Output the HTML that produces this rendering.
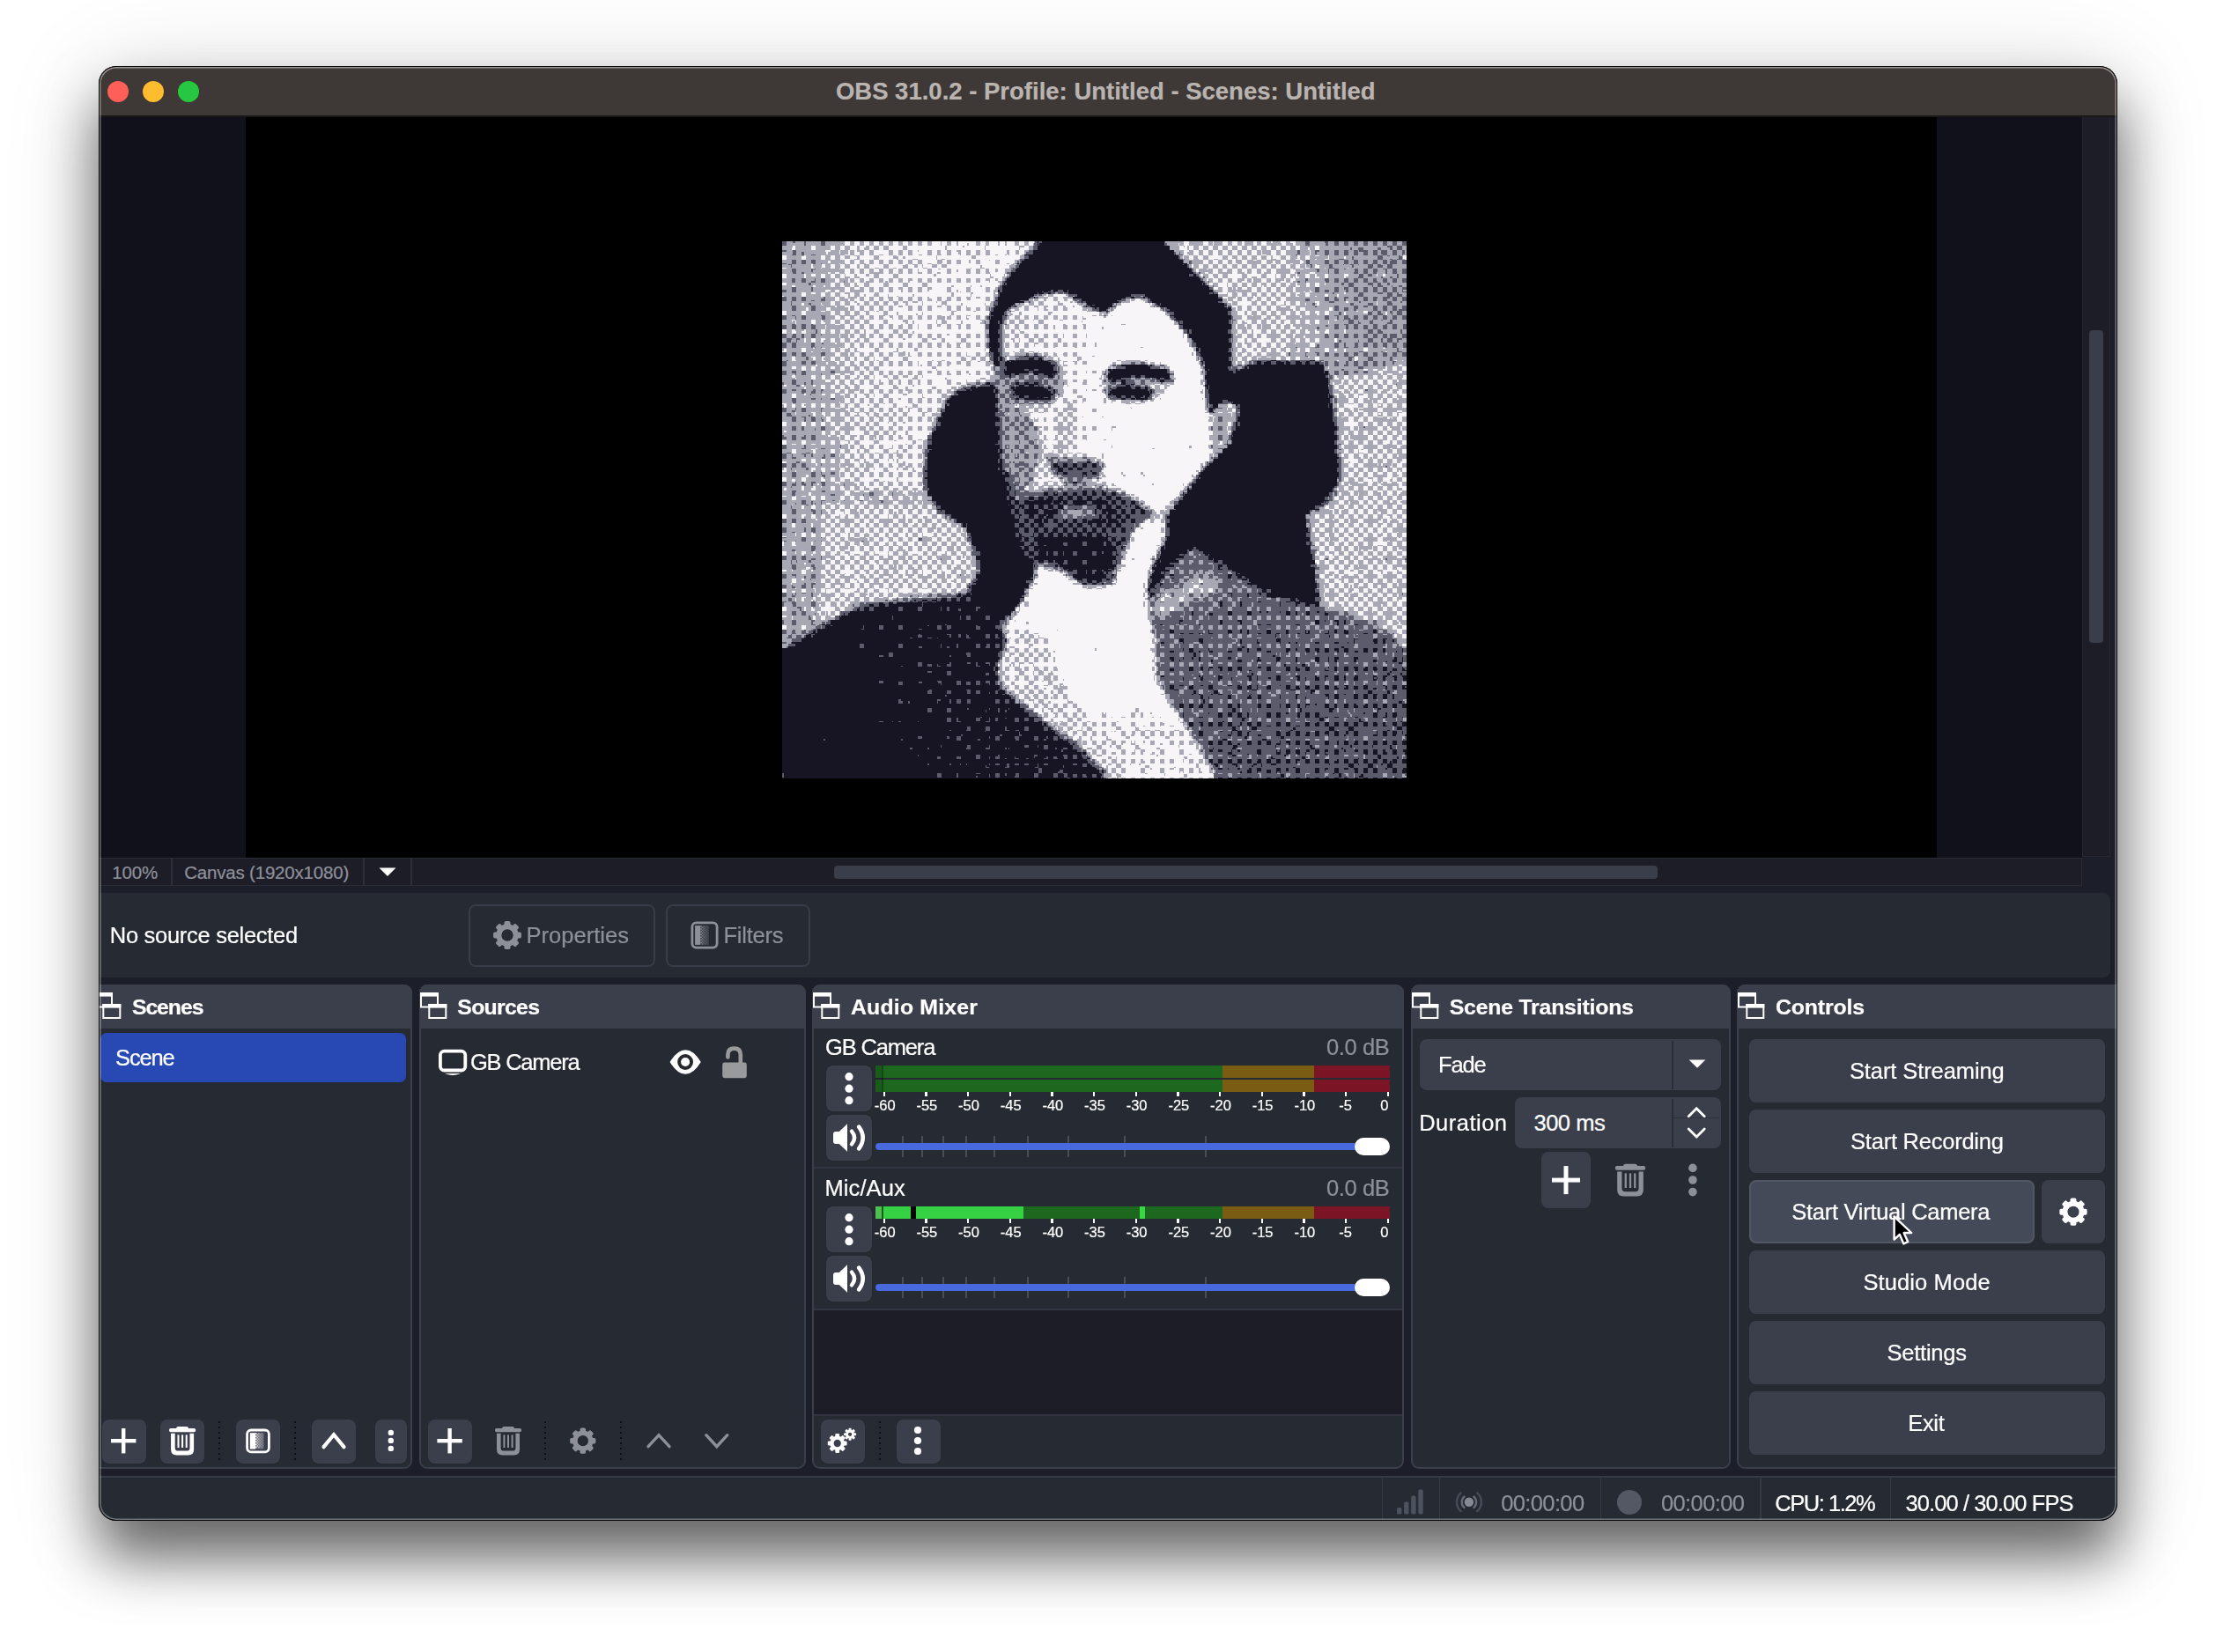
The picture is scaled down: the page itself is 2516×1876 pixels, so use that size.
<!DOCTYPE html>
<html><head><meta charset="utf-8"><title>OBS 31.0.2 - Profile: Untitled - Scenes: Untitled</title>
<style>
html,body{margin:0;padding:0;background:#fff;}
body{width:2516px;height:1876px;position:relative;overflow:hidden;font-family:"Liberation Sans",sans-serif;}
.a{position:absolute;display:block;box-sizing:border-box;}
.t{position:absolute;white-space:nowrap;-webkit-text-stroke:0.22px currentColor;}
#shadow{position:absolute;left:112px;top:75px;width:2292px;height:1652px;border-radius:20px;
 box-shadow:0 42px 64px 0 rgba(0,0,0,0.56),0 10px 110px 0 rgba(0,0,0,0.16);}
#win{position:absolute;left:112px;top:75px;width:2292px;height:1652px;border-radius:20px;overflow:hidden;background:#1c1e29;}
#in{position:absolute;left:-112px;top:-75px;width:2516px;height:1876px;transform:translateZ(0);}
#edge{position:absolute;left:112px;top:75px;width:2292px;height:1652px;border-radius:20px;box-sizing:border-box;
 border:1px solid rgba(0,0,0,0.82);box-shadow:inset 0 0 0 1.6px rgba(255,255,255,0.34),inset 0 1.2px 0 0.4px rgba(255,255,255,0.2);pointer-events:none;}
</style></head><body>
<div id="shadow"></div>
<div id="win"><div id="in">
<div class="a" style="left:112.0px;top:75.0px;width:2292.0px;height:57.0px;background:#3e3836;"></div>
<div class="a" style="left:112.0px;top:131.0px;width:2292.0px;height:2.0px;background:#1a1716;"></div>
<div class="a" style="left:121.8px;top:91.8px;width:24.4px;height:24.4px;border-radius:50%;background:#fe5f57;"></div>
<div class="a" style="left:161.8px;top:91.8px;width:24.4px;height:24.4px;border-radius:50%;background:#febc2e;"></div>
<div class="a" style="left:201.8px;top:91.8px;width:24.4px;height:24.4px;border-radius:50%;background:#27c840;"></div>
<div class="t " style="left:948.9px;top:83.5px;height:40px;line-height:40px;font-size:27.5px;color:#bab4b1;font-weight:bold;">OBS 31.0.2 - Profile: Untitled - Scenes: Untitled</div>
<div class="a" style="left:112.0px;top:133.0px;width:2252.0px;height:841.0px;background:#10111a;"></div>
<div class="a" style="left:278.6px;top:133.0px;width:1920.4px;height:841.0px;background:#000;"></div>
<div class="a" style="left:2364.0px;top:133.0px;width:32.0px;height:840.0px;background:#1c1d27;border-left:1px solid #262830;border-right:1px solid #262830;border-bottom:1px solid #262830;"></div>
<div class="a" style="left:2372.0px;top:375.3px;width:16.2px;height:354.7px;background:#3a3e4b;border-radius:4px;"></div>
<div class="a" style="left:112.0px;top:974.0px;width:2252.0px;height:32.0px;background:#1c1d27;border-top:1px solid #2a2c35;border-bottom:1px solid #2a2c35;"></div>
<div class="a" style="left:2363.0px;top:974.0px;width:1.0px;height:32.0px;background:#2a2c35;"></div>
<div class="a" style="left:947.0px;top:982.5px;width:935.0px;height:15.5px;background:#3a3e4b;border-radius:4px;"></div>
<div class="a" style="left:194.0px;top:975.0px;width:1.5px;height:30.0px;background:#2c2e38;"></div>
<div class="a" style="left:412.0px;top:975.0px;width:1.5px;height:30.0px;background:#2c2e38;"></div>
<div class="a" style="left:466.3px;top:975.0px;width:1.5px;height:30.0px;background:#2c2e38;"></div>
<div class="t " style="left:127.3px;top:971.3px;height:40px;line-height:40px;font-size:20.5px;color:#8d9099;letter-spacing:-0.19px;">100%</div>
<div class="t " style="left:209.2px;top:971.3px;height:40px;line-height:40px;font-size:20.5px;color:#8d9099;letter-spacing:-0.19px;">Canvas (1920x1080)</div>
<svg class="a" style="left:429.0px;top:984.0px;" width="22.0" height="12.0" viewBox="0 0 22 12"><path d="M1.5,1.5 L20.5,1.5 L11,11 Z" fill="#fff"/></svg>
<svg class="a" style="left:887.6px;top:273.6px;" width="709.2" height="610.6" viewBox="0 0 128 112" preserveAspectRatio="none" shape-rendering="crispEdges"><defs>
<linearGradient id="bgL" x1="0" y1="0" x2="1" y2="0"><stop offset="0" stop-color="rgb(153,153,153)"/><stop offset="0.085" stop-color="rgb(158,158,158)"/><stop offset="0.14" stop-color="rgb(194,194,194)"/><stop offset="0.24" stop-color="rgb(209,209,209)"/><stop offset="0.36" stop-color="rgb(219,219,219)"/><stop offset="0.55" stop-color="rgb(214,214,214)"/><stop offset="1" stop-color="rgb(204,204,204)"/></linearGradient>
<linearGradient id="bgR" x1="0" y1="0.1" x2="1" y2="0" ><stop offset="0" stop-color="rgb(196,196,196)"/><stop offset="0.42" stop-color="rgb(189,189,189)"/><stop offset="0.62" stop-color="rgb(150,150,150)"/><stop offset="1" stop-color="rgb(128,128,128)"/></linearGradient>
<linearGradient id="jkL" x1="0" y1="0.5" x2="1" y2="0.3"><stop offset="0" stop-color="rgb(0,0,0)"/><stop offset="0.22" stop-color="rgb(0,0,0)"/><stop offset="0.5" stop-color="rgb(26,26,26)"/><stop offset="0.8" stop-color="rgb(33,33,33)"/><stop offset="1" stop-color="rgb(8,8,8)"/></linearGradient>
<linearGradient id="jkR" x1="0" y1="0" x2="0.4" y2="1"><stop offset="0" stop-color="rgb(112,112,112)"/><stop offset="1" stop-color="rgb(84,84,84)"/></linearGradient>
<linearGradient id="face" x1="0" y1="0" x2="1" y2="0"><stop offset="0" stop-color="rgb(189,189,189)"/><stop offset="0.3" stop-color="rgb(219,219,219)"/><stop offset="0.5" stop-color="rgb(245,245,245)"/><stop offset="1" stop-color="rgb(255,255,255)"/></linearGradient>
<linearGradient id="hand" x1="0" y1="0" x2="1" y2="0"><stop offset="0" stop-color="rgb(217,217,217)"/><stop offset="0.25" stop-color="rgb(252,252,252)"/><stop offset="1" stop-color="rgb(252,252,252)"/></linearGradient>
<filter id="gbd" x="-4" y="-4" width="136" height="120" filterUnits="userSpaceOnUse" primitiveUnits="userSpaceOnUse" color-interpolation-filters="sRGB"><feGaussianBlur in="SourceGraphic" stdDeviation="0.55" result="g0"/><feTurbulence type="fractalNoise" baseFrequency="0.5" numOctaves="2" seed="7" result="tn"/><feColorMatrix in="tn" type="matrix" values="1.6 0 0 0 -0.3  1.6 0 0 0 -0.3  1.6 0 0 0 -0.3  0 0 0 0 1" result="noise"/><feComposite in="g0" in2="noise" operator="arithmetic" k1="0" k2="1" k3="0.2" k4="-0.1" result="g1"/><feFlood x="0.0000" y="0" width="0.1687" height="1" flood-color="rgb(234,0,0)" result="rx0"/><feFlood x="0.1667" y="0" width="0.1687" height="1" flood-color="rgb(191,0,0)" result="rx1"/><feFlood x="0.3333" y="0" width="0.1687" height="1" flood-color="rgb(149,0,0)" result="rx2"/><feFlood x="0.5000" y="0" width="0.1687" height="1" flood-color="rgb(106,0,0)" result="rx3"/><feFlood x="0.6667" y="0" width="0.1687" height="1" flood-color="rgb(64,0,0)" result="rx4"/><feFlood x="0.8333" y="0" width="0.1687" height="1" flood-color="rgb(21,0,0)" result="rx5"/><feMerge x="0" y="0" width="1" height="1" result="rampx"><feMergeNode in="rx0"/><feMergeNode in="rx1"/><feMergeNode in="rx2"/><feMergeNode in="rx3"/><feMergeNode in="rx4"/><feMergeNode in="rx5"/></feMerge><feFlood x="0" y="0.0000" width="1" height="0.1687" flood-color="rgb(0,234,0)" result="ry0"/><feFlood x="0" y="0.1667" width="1" height="0.1687" flood-color="rgb(0,191,0)" result="ry1"/><feFlood x="0" y="0.3333" width="1" height="0.1687" flood-color="rgb(0,149,0)" result="ry2"/><feFlood x="0" y="0.5000" width="1" height="0.1687" flood-color="rgb(0,106,0)" result="ry3"/><feFlood x="0" y="0.6667" width="1" height="0.1687" flood-color="rgb(0,64,0)" result="ry4"/><feFlood x="0" y="0.8333" width="1" height="0.1687" flood-color="rgb(0,21,0)" result="ry5"/><feMerge x="0" y="0" width="1" height="1" result="rampy"><feMergeNode in="ry0"/><feMergeNode in="ry1"/><feMergeNode in="ry2"/><feMergeNode in="ry3"/><feMergeNode in="ry4"/><feMergeNode in="ry5"/></feMerge><feComposite in="rampx" in2="rampy" operator="arithmetic" k1="0" k2="1" k3="1" k4="0" x="0" y="0" width="1" height="1" result="ramp"/><feTile in="ramp" x="-4" y="-4" width="136" height="120" result="dmap"/><feDisplacementMap in="g1" in2="dmap" scale="1" xChannelSelector="R" yChannelSelector="G" result="gray"/><feFlood x="0" y="0" width="1" height="1" flood-color="rgb(8,8,8)" result="b00"/><feFlood x="1" y="0" width="1" height="1" flood-color="rgb(135,135,135)" result="b01"/><feFlood x="2" y="0" width="1" height="1" flood-color="rgb(40,40,40)" result="b02"/><feFlood x="3" y="0" width="1" height="1" flood-color="rgb(167,167,167)" result="b03"/><feFlood x="0" y="1" width="1" height="1" flood-color="rgb(199,199,199)" result="b10"/><feFlood x="1" y="1" width="1" height="1" flood-color="rgb(72,72,72)" result="b11"/><feFlood x="2" y="1" width="1" height="1" flood-color="rgb(231,231,231)" result="b12"/><feFlood x="3" y="1" width="1" height="1" flood-color="rgb(104,104,104)" result="b13"/><feFlood x="0" y="2" width="1" height="1" flood-color="rgb(56,56,56)" result="b20"/><feFlood x="1" y="2" width="1" height="1" flood-color="rgb(183,183,183)" result="b21"/><feFlood x="2" y="2" width="1" height="1" flood-color="rgb(24,24,24)" result="b22"/><feFlood x="3" y="2" width="1" height="1" flood-color="rgb(151,151,151)" result="b23"/><feFlood x="0" y="3" width="1" height="1" flood-color="rgb(247,247,247)" result="b30"/><feFlood x="1" y="3" width="1" height="1" flood-color="rgb(120,120,120)" result="b31"/><feFlood x="2" y="3" width="1" height="1" flood-color="rgb(215,215,215)" result="b32"/><feFlood x="3" y="3" width="1" height="1" flood-color="rgb(88,88,88)" result="b33"/><feMerge x="0" y="0" width="4" height="4" result="tile"><feMergeNode in="b00"/><feMergeNode in="b01"/><feMergeNode in="b02"/><feMergeNode in="b03"/><feMergeNode in="b10"/><feMergeNode in="b11"/><feMergeNode in="b12"/><feMergeNode in="b13"/><feMergeNode in="b20"/><feMergeNode in="b21"/><feMergeNode in="b22"/><feMergeNode in="b23"/><feMergeNode in="b30"/><feMergeNode in="b31"/><feMergeNode in="b32"/><feMergeNode in="b33"/></feMerge><feTile in="tile" x="-4" y="-4" width="136" height="120" result="pat"/><feComposite in="gray" in2="pat" operator="arithmetic" k1="0" k2="1" k3="0.3333" k4="-0.16667" result="d"/><feComponentTransfer in="d"><feFuncR type="discrete" tableValues="0.094 0.357 0.659 0.969"/><feFuncG type="discrete" tableValues="0.086 0.357 0.659 0.961"/><feFuncB type="discrete" tableValues="0.141 0.420 0.710 0.976"/><feFuncA type="linear" slope="0" intercept="1"/></feComponentTransfer></filter></defs><g filter="url(#gbd)"><rect x="-6" y="-6" width="140" height="124" fill="rgb(204,204,204)"/><rect x="-5" y="-5" width="138" height="122" fill="url(#bgL)"/><polygon points="78.14,0.00 78.14,-5.05 132.97,-5.05 128.00,0.00 132.97,85.88 128.00,85.88 108.68,76.49 80.27,46.19" fill="url(#bgR)" /><polygon points="111.52,29.59 128.00,24.54 132.97,24.54 132.97,85.15 128.00,85.15 122.89,80.10 110.24,75.77 107.26,57.01 114.36,49.43" fill="rgb(186,186,186)" /><polygon points="-4.97,52.10 0.00,52.10 33.39,52.10 33.39,53.84 0.00,53.84 -4.97,53.84" fill="rgb(158,158,158)" /><polygon points="-4.97,53.84 0.00,53.84 39.07,53.84 40.49,74.33 16.34,75.77 0.00,85.15 -4.97,85.15" fill="rgb(191,191,191)" /><polygon points="-4.97,53.84 0.00,53.84 8.52,53.84 7.10,80.82 0.00,85.15 -4.97,85.15" fill="rgb(158,158,158)" /><polygon points="33.95,32.47 37.65,30.16 44.75,29.23 44.75,47.63 50.08,55.57 51.85,68.56 49.01,77.22 40.49,68.56 37.65,59.54 31.96,55.93 28.98,50.52 29.69,41.86" fill="rgb(0,0,0)" /><polygon points="91.63,27.42 97.03,24.97 109.96,24.90 111.95,28.29 113.51,38.97 114.22,49.43 111.66,54.27 107.12,57.01 108.54,64.23 110.24,75.92 100.16,73.75 89.50,66.75 83.82,63.51 78.85,67.84 74.94,74.33 73.52,64.95 78.14,57.73 85.95,47.63 87.37,36.08" fill="rgb(0,0,0)" /><polygon points="-4.97,85.30 0.00,85.30 9.23,79.38 16.34,75.63 37.65,73.46 49.72,73.25 44.75,80.82 46.17,82.63 44.04,88.76 44.75,92.73 51.14,98.14 58.96,103.92 66.06,110.56 66.06,115.61 66.06,117.05 66.06,112.00 -4.97,117.05 0.00,112.00" fill="url(#jkL)" /><polygon points="40.49,67.84 51.85,67.84 51.85,70.00 49.01,75.05 44.75,80.46 37.65,73.97" fill="rgb(5,5,5)" /><polygon points="74.94,74.33 78.85,67.84 83.82,63.51 89.50,66.75 100.16,73.75 110.24,75.92 122.89,80.25 128.00,85.30 132.97,85.30 132.97,117.05 128.00,112.00 88.08,117.05 88.08,112.00 84.53,103.92 76.71,91.65 76.00,82.27" fill="url(#jkR)" /><polygon points="76.00,73.97 87.72,68.41 89.86,72.31 76.71,78.66" fill="rgb(168,168,168)" /><polygon points="43.90,14.79 51.85,11.19 57.54,10.10 62.51,13.35 66.06,15.01 68.90,12.41 73.16,11.19 78.85,14.43 83.11,19.48 86.09,25.98 86.80,36.08 90.92,33.20 93.41,34.64 91.63,41.86 87.37,46.19 85.81,47.63 80.27,53.40 75.29,58.45 69.61,60.98 56.12,59.54 49.01,53.40 44.75,46.19 43.76,28.87" fill="url(#face)" /><polygon points="44.75,9.38 49.01,3.61 52.92,0.00 52.92,-5.05 78.14,-5.05 78.14,0.00 83.82,5.63 88.79,10.68 91.92,14.29 92.13,25.98 92.48,33.20 90.57,33.20 87.37,36.44 86.30,25.98 83.11,19.48 78.85,14.58 73.16,11.33 68.90,12.56 66.06,15.15 62.51,13.42 57.54,10.25 51.85,11.40 46.31,13.86 44.75,17.32 44.61,29.59 42.48,23.45 41.91,16.60" fill="rgb(0,0,0)" /><polygon points="87.37,37.16 90.21,34.28 92.48,35.00 90.92,41.86 87.37,45.46" fill="rgb(153,153,153)" /><ellipse cx="51.14" cy="29.23" rx="6.75" ry="5.05" fill="rgb(102,102,102)" opacity="0.6"/><ellipse cx="72.10" cy="29.44" rx="7.46" ry="3.97" fill="rgb(128,128,128)" opacity="0.55"/><polygon points="45.18,25.11 51.14,23.67 56.54,25.55 55.83,28.29 50.43,26.99 45.60,28.29" fill="rgb(0,0,0)" /><polygon points="66.34,26.56 71.74,25.11 78.85,26.27 80.41,29.30 72.45,28.29 66.77,29.44" fill="rgb(0,0,0)" /><polygon points="47.02,30.16 51.14,29.30 55.83,30.89 55.41,33.05 47.59,32.76" fill="rgb(0,0,0)" /><polygon points="66.63,30.45 71.03,29.59 76.00,30.74 75.29,33.05 67.05,32.76" fill="rgb(0,0,0)" /><polygon points="53.84,44.16 56.83,45.46 63.22,45.18 66.06,46.19 64.99,49.43 58.96,50.52 55.41,48.35" fill="rgb(76,76,76)" /><polygon points="57.54,33.20 61.09,33.20 58.96,44.74 55.41,45.46" fill="rgb(158,158,158)" opacity="0.6"/><polygon points="44.75,45.46 49.01,52.68 55.41,51.38 66.06,50.88 72.45,53.40 78.14,57.73 73.87,60.98 70.32,67.84 68.19,71.59 61.80,71.80 56.83,68.20 50.43,66.75 47.59,60.62" fill="rgb(76,76,76)" /><polygon points="49.72,53.40 66.77,52.68 70.32,56.29 66.06,59.18 51.85,58.45" fill="rgb(46,46,46)" /><polygon points="55.41,55.93 63.22,55.21 65.35,57.01 57.54,57.88" fill="rgb(153,153,153)" /><polygon points="51.85,60.98 66.06,60.62 68.90,64.95 66.06,70.72 61.80,71.44 57.54,67.84 51.85,66.03" fill="rgb(31,31,31)" /><polygon points="44.04,29.59 49.01,33.20 53.27,41.86 51.85,50.52 49.01,52.68 44.75,45.46" fill="rgb(128,128,128)" opacity="0.8"/><polygon points="74.73,57.73 78.28,57.59 78.99,60.62 75.65,67.84 74.02,75.05 76.00,82.27 76.71,91.65 80.27,98.14 84.53,103.92 88.22,110.56 88.22,115.61 66.06,115.61 66.06,110.56 58.96,103.92 51.14,98.14 44.75,92.73 44.04,88.76 46.17,82.63 44.75,80.46 49.01,75.05 51.85,69.42 57.54,69.42 63.22,72.31 67.62,71.59 69.75,66.39 71.88,60.62" fill="url(#hand)" /><polygon points="44.75,88.76 49.01,80.82 53.98,82.27 57.54,91.65 63.22,99.59 70.32,110.56 70.32,115.61 66.06,115.61 66.06,110.56 58.96,103.92 51.14,98.14 44.75,92.73" fill="rgb(199,199,199)" /><polygon points="63.22,99.59 73.16,96.70 82.40,101.75 87.37,110.56 87.37,115.61 70.32,115.61 70.32,110.56" fill="rgb(214,214,214)" /></g></svg>
<div class="a" style="left:104.0px;top:1014.0px;width:2292.0px;height:96.0px;background:#252a33;border-radius:8px;"></div>
<div class="t " style="left:124.8px;top:1041.7px;height:40px;line-height:40px;font-size:25.5px;color:#fff;letter-spacing:-0.29px;">No source selected</div>
<div class="a" style="left:532.3px;top:1026.5px;width:211.5px;height:71.0px;background:transparent;border-radius:8px;border:2px solid #383c48;"></div>
<svg class="a" style="left:559.0px;top:1045.0px;" width="34.0" height="34.0" viewBox="0 0 34 34"><circle cx="17" cy="17" r="9.70" fill="none" stroke="#8d9099" stroke-width="6.04"/><rect x="13.50" y="1.10" width="7.00" height="6.36" rx="1.75" fill="#8d9099" transform="rotate(0.0 17 17)"/><rect x="13.50" y="1.10" width="7.00" height="6.36" rx="1.75" fill="#8d9099" transform="rotate(45.0 17 17)"/><rect x="13.50" y="1.10" width="7.00" height="6.36" rx="1.75" fill="#8d9099" transform="rotate(90.0 17 17)"/><rect x="13.50" y="1.10" width="7.00" height="6.36" rx="1.75" fill="#8d9099" transform="rotate(135.0 17 17)"/><rect x="13.50" y="1.10" width="7.00" height="6.36" rx="1.75" fill="#8d9099" transform="rotate(180.0 17 17)"/><rect x="13.50" y="1.10" width="7.00" height="6.36" rx="1.75" fill="#8d9099" transform="rotate(225.0 17 17)"/><rect x="13.50" y="1.10" width="7.00" height="6.36" rx="1.75" fill="#8d9099" transform="rotate(270.0 17 17)"/><rect x="13.50" y="1.10" width="7.00" height="6.36" rx="1.75" fill="#8d9099" transform="rotate(315.0 17 17)"/></svg>
<div class="t " style="left:597.4px;top:1041.7px;height:40px;line-height:40px;font-size:25.5px;color:#8d9099;letter-spacing:0.04px;">Properties</div>
<div class="a" style="left:756.4px;top:1026.5px;width:163.6px;height:71.0px;background:transparent;border-radius:8px;border:2px solid #383c48;"></div>
<svg class="a" style="left:784.0px;top:1046.0px;" width="32.0" height="32.0" viewBox="0 0 32 32"><rect x="1.9" y="1.9" width="28.2" height="28.2" rx="4.5" fill="none" stroke="#8d9099" stroke-width="2.8"/><rect x="5.1" y="5.1" width="6.2" height="21.8" fill="#8d9099"/><rect x="11.30" y="5.10" width="1.55" height="1.55" fill="#8d9099" fill-opacity="0.95"/><rect x="11.30" y="8.20" width="1.55" height="1.55" fill="#8d9099" fill-opacity="0.95"/><rect x="11.30" y="11.30" width="1.55" height="1.55" fill="#8d9099" fill-opacity="0.95"/><rect x="11.30" y="14.40" width="1.55" height="1.55" fill="#8d9099" fill-opacity="0.95"/><rect x="11.30" y="17.50" width="1.55" height="1.55" fill="#8d9099" fill-opacity="0.95"/><rect x="11.30" y="20.60" width="1.55" height="1.55" fill="#8d9099" fill-opacity="0.95"/><rect x="11.30" y="23.70" width="1.55" height="1.55" fill="#8d9099" fill-opacity="0.95"/><rect x="12.85" y="6.65" width="1.55" height="1.55" fill="#8d9099" fill-opacity="0.75"/><rect x="12.85" y="9.75" width="1.55" height="1.55" fill="#8d9099" fill-opacity="0.75"/><rect x="12.85" y="12.85" width="1.55" height="1.55" fill="#8d9099" fill-opacity="0.75"/><rect x="12.85" y="15.95" width="1.55" height="1.55" fill="#8d9099" fill-opacity="0.75"/><rect x="12.85" y="19.05" width="1.55" height="1.55" fill="#8d9099" fill-opacity="0.75"/><rect x="12.85" y="22.15" width="1.55" height="1.55" fill="#8d9099" fill-opacity="0.75"/><rect x="12.85" y="25.25" width="1.55" height="1.55" fill="#8d9099" fill-opacity="0.75"/><rect x="14.40" y="5.10" width="1.55" height="1.55" fill="#8d9099" fill-opacity="0.55"/><rect x="14.40" y="8.20" width="1.55" height="1.55" fill="#8d9099" fill-opacity="0.55"/><rect x="14.40" y="11.30" width="1.55" height="1.55" fill="#8d9099" fill-opacity="0.55"/><rect x="14.40" y="14.40" width="1.55" height="1.55" fill="#8d9099" fill-opacity="0.55"/><rect x="14.40" y="17.50" width="1.55" height="1.55" fill="#8d9099" fill-opacity="0.55"/><rect x="14.40" y="20.60" width="1.55" height="1.55" fill="#8d9099" fill-opacity="0.55"/><rect x="14.40" y="23.70" width="1.55" height="1.55" fill="#8d9099" fill-opacity="0.55"/><rect x="15.95" y="6.65" width="1.55" height="1.55" fill="#8d9099" fill-opacity="0.4"/><rect x="15.95" y="9.75" width="1.55" height="1.55" fill="#8d9099" fill-opacity="0.4"/><rect x="15.95" y="12.85" width="1.55" height="1.55" fill="#8d9099" fill-opacity="0.4"/><rect x="15.95" y="15.95" width="1.55" height="1.55" fill="#8d9099" fill-opacity="0.4"/><rect x="15.95" y="19.05" width="1.55" height="1.55" fill="#8d9099" fill-opacity="0.4"/><rect x="15.95" y="22.15" width="1.55" height="1.55" fill="#8d9099" fill-opacity="0.4"/><rect x="15.95" y="25.25" width="1.55" height="1.55" fill="#8d9099" fill-opacity="0.4"/><rect x="17.50" y="5.10" width="1.55" height="1.55" fill="#8d9099" fill-opacity="0.28"/><rect x="17.50" y="8.20" width="1.55" height="1.55" fill="#8d9099" fill-opacity="0.28"/><rect x="17.50" y="11.30" width="1.55" height="1.55" fill="#8d9099" fill-opacity="0.28"/><rect x="17.50" y="14.40" width="1.55" height="1.55" fill="#8d9099" fill-opacity="0.28"/><rect x="17.50" y="17.50" width="1.55" height="1.55" fill="#8d9099" fill-opacity="0.28"/><rect x="17.50" y="20.60" width="1.55" height="1.55" fill="#8d9099" fill-opacity="0.28"/><rect x="17.50" y="23.70" width="1.55" height="1.55" fill="#8d9099" fill-opacity="0.28"/><rect x="19.05" y="6.65" width="1.55" height="1.55" fill="#8d9099" fill-opacity="0.18"/><rect x="19.05" y="9.75" width="1.55" height="1.55" fill="#8d9099" fill-opacity="0.18"/><rect x="19.05" y="12.85" width="1.55" height="1.55" fill="#8d9099" fill-opacity="0.18"/><rect x="19.05" y="15.95" width="1.55" height="1.55" fill="#8d9099" fill-opacity="0.18"/><rect x="19.05" y="19.05" width="1.55" height="1.55" fill="#8d9099" fill-opacity="0.18"/><rect x="19.05" y="22.15" width="1.55" height="1.55" fill="#8d9099" fill-opacity="0.18"/><rect x="19.05" y="25.25" width="1.55" height="1.55" fill="#8d9099" fill-opacity="0.18"/><rect x="11.3" y="5.1" width="9.5" height="21.8" fill="#8d9099" fill-opacity="0.22"/></svg>
<div class="t " style="left:821.5px;top:1041.7px;height:40px;line-height:40px;font-size:25.5px;color:#8d9099;letter-spacing:-0.23px;">Filters</div>
<div class="a" style="left:105.5px;top:1118.0px;width:362.0px;height:549.5px;background:#252a33;border-radius:9px;border:2px solid #3b3f4c;"></div>
<div class="a" style="left:105.5px;top:1118.0px;width:362.0px;height:50.0px;background:#3b3f4c;border-radius:9px 9px 0 0;"></div>
<svg class="a" style="left:106.7px;top:1126.5px;" width="31.0" height="31.0" viewBox="0 0 31 31"><rect x="1" y="2" width="19" height="14.5" fill="none" stroke="#fff" stroke-width="2"/><rect x="0" y="0" width="21" height="4.6" fill="#fff"/><rect x="10.3" y="14" width="19" height="15" fill="#3b3f4c" stroke="#fff" stroke-width="2"/><rect x="9.3" y="13" width="21" height="4.6" fill="#fff"/></svg>
<div class="t " style="left:149.9px;top:1123.9px;height:40px;line-height:40px;font-size:24.8px;color:#fff;letter-spacing:-1.05px;font-weight:bold;">Scenes</div>
<div class="a" style="left:476.0px;top:1118.0px;width:438.5px;height:549.5px;background:#252a33;border-radius:9px;border:2px solid #3b3f4c;"></div>
<div class="a" style="left:476.0px;top:1118.0px;width:438.5px;height:50.0px;background:#3b3f4c;border-radius:9px 9px 0 0;"></div>
<svg class="a" style="left:477.2px;top:1126.5px;" width="31.0" height="31.0" viewBox="0 0 31 31"><rect x="1" y="2" width="19" height="14.5" fill="none" stroke="#fff" stroke-width="2"/><rect x="0" y="0" width="21" height="4.6" fill="#fff"/><rect x="10.3" y="14" width="19" height="15" fill="#3b3f4c" stroke="#fff" stroke-width="2"/><rect x="9.3" y="13" width="21" height="4.6" fill="#fff"/></svg>
<div class="t " style="left:519.3px;top:1123.9px;height:40px;line-height:40px;font-size:24.8px;color:#fff;letter-spacing:-0.70px;font-weight:bold;">Sources</div>
<div class="a" style="left:922.0px;top:1118.0px;width:672.0px;height:549.5px;background:#252a33;border-radius:9px;border:2px solid #3b3f4c;"></div>
<div class="a" style="left:922.0px;top:1118.0px;width:672.0px;height:50.0px;background:#3b3f4c;border-radius:9px 9px 0 0;"></div>
<svg class="a" style="left:923.2px;top:1126.5px;" width="31.0" height="31.0" viewBox="0 0 31 31"><rect x="1" y="2" width="19" height="14.5" fill="none" stroke="#fff" stroke-width="2"/><rect x="0" y="0" width="21" height="4.6" fill="#fff"/><rect x="10.3" y="14" width="19" height="15" fill="#3b3f4c" stroke="#fff" stroke-width="2"/><rect x="9.3" y="13" width="21" height="4.6" fill="#fff"/></svg>
<div class="t " style="left:966.0px;top:1123.9px;height:40px;line-height:40px;font-size:24.8px;color:#fff;letter-spacing:0.20px;font-weight:bold;">Audio Mixer</div>
<div class="a" style="left:1601.5px;top:1118.0px;width:363.0px;height:549.5px;background:#252a33;border-radius:9px;border:2px solid #3b3f4c;"></div>
<div class="a" style="left:1601.5px;top:1118.0px;width:363.0px;height:50.0px;background:#3b3f4c;border-radius:9px 9px 0 0;"></div>
<svg class="a" style="left:1602.7px;top:1126.5px;" width="31.0" height="31.0" viewBox="0 0 31 31"><rect x="1" y="2" width="19" height="14.5" fill="none" stroke="#fff" stroke-width="2"/><rect x="0" y="0" width="21" height="4.6" fill="#fff"/><rect x="10.3" y="14" width="19" height="15" fill="#3b3f4c" stroke="#fff" stroke-width="2"/><rect x="9.3" y="13" width="21" height="4.6" fill="#fff"/></svg>
<div class="t " style="left:1645.7px;top:1123.9px;height:40px;line-height:40px;font-size:24.8px;color:#fff;letter-spacing:-0.19px;font-weight:bold;">Scene Transitions</div>
<div class="a" style="left:1971.5px;top:1118.0px;width:439.5px;height:549.5px;background:#252a33;border-radius:9px;border:2px solid #3b3f4c;"></div>
<div class="a" style="left:1971.5px;top:1118.0px;width:439.5px;height:50.0px;background:#3b3f4c;border-radius:9px 9px 0 0;"></div>
<svg class="a" style="left:1972.7px;top:1126.5px;" width="31.0" height="31.0" viewBox="0 0 31 31"><rect x="1" y="2" width="19" height="14.5" fill="none" stroke="#fff" stroke-width="2"/><rect x="0" y="0" width="21" height="4.6" fill="#fff"/><rect x="10.3" y="14" width="19" height="15" fill="#3b3f4c" stroke="#fff" stroke-width="2"/><rect x="9.3" y="13" width="21" height="4.6" fill="#fff"/></svg>
<div class="t " style="left:2016.0px;top:1123.9px;height:40px;line-height:40px;font-size:24.8px;color:#fff;letter-spacing:-0.14px;font-weight:bold;">Controls</div>
<div class="a" style="left:114.0px;top:1173.0px;width:347.0px;height:56.0px;background:#2849b4;border-radius:7px;"></div>
<div class="t " style="left:131.1px;top:1181.2px;height:40px;line-height:40px;font-size:25.5px;color:#fff;letter-spacing:-1.19px;">Scene</div>
<div class="a" style="left:116.2px;top:1612.0px;width:49.8px;height:50.0px;background:#3b3f4c;border-radius:8px;"></div>
<div class="a" style="left:182.0px;top:1612.0px;width:49.8px;height:50.0px;background:#3b3f4c;border-radius:8px;"></div>
<div class="a" style="left:268.0px;top:1612.0px;width:50.0px;height:50.0px;background:#3b3f4c;border-radius:8px;"></div>
<div class="a" style="left:354.0px;top:1612.0px;width:50.0px;height:50.0px;background:#3b3f4c;border-radius:8px;"></div>
<div class="a" style="left:426.0px;top:1612.0px;width:35.8px;height:50.0px;background:#3b3f4c;border-radius:8px;"></div>
<svg class="a" style="left:112.0px;top:1608.0px;" width="356.0" height="58.0" viewBox="112 1608 356 58"><rect x="126.0" y="1634.0" width="28.4" height="4.4" fill="#fff"/><rect x="138.0" y="1622.0" width="4.4" height="28.4" fill="#fff"/><g transform="translate(207.1,1636.6) scale(1.0)" fill="#fff"><path d="M-7,-14.3 Q-7,-16.6 -4.6,-16.6 L4.6,-16.6 Q7,-16.6 7,-14.3 Z"/><rect x="-15" y="-14.6" width="30" height="4.2" rx="1.6"/><path d="M-13,-8.8 L-8.4,-8.8 L-8.4,7.6 Q-8.4,11 -5,11 L5,11 Q8.4,11 8.4,7.6 L8.4,-8.8 L13,-8.8 L13,9.4 Q13,15.8 6.6,15.8 L-6.6,15.8 Q-13,15.8 -13,9.4 Z"/><rect x="-5.6" y="-7.2" width="2" height="14.6"/><rect x="-1" y="-7.2" width="2" height="14.6"/><rect x="3.6" y="-7.2" width="2" height="14.6"/></g><rect x="280.6" y="1624.0" width="24.8" height="24.8" rx="4.5" fill="none" stroke="#fff" stroke-width="2.8"/><rect x="283.8" y="1627.2" width="6.2" height="18.4" fill="#fff"/><rect x="290.00" y="1627.20" width="1.55" height="1.55" fill="#fff" fill-opacity="0.95"/><rect x="290.00" y="1630.30" width="1.55" height="1.55" fill="#fff" fill-opacity="0.95"/><rect x="290.00" y="1633.40" width="1.55" height="1.55" fill="#fff" fill-opacity="0.95"/><rect x="290.00" y="1636.50" width="1.55" height="1.55" fill="#fff" fill-opacity="0.95"/><rect x="290.00" y="1639.60" width="1.55" height="1.55" fill="#fff" fill-opacity="0.95"/><rect x="290.00" y="1642.70" width="1.55" height="1.55" fill="#fff" fill-opacity="0.95"/><rect x="291.55" y="1628.75" width="1.55" height="1.55" fill="#fff" fill-opacity="0.75"/><rect x="291.55" y="1631.85" width="1.55" height="1.55" fill="#fff" fill-opacity="0.75"/><rect x="291.55" y="1634.95" width="1.55" height="1.55" fill="#fff" fill-opacity="0.75"/><rect x="291.55" y="1638.05" width="1.55" height="1.55" fill="#fff" fill-opacity="0.75"/><rect x="291.55" y="1641.15" width="1.55" height="1.55" fill="#fff" fill-opacity="0.75"/><rect x="293.10" y="1627.20" width="1.55" height="1.55" fill="#fff" fill-opacity="0.55"/><rect x="293.10" y="1630.30" width="1.55" height="1.55" fill="#fff" fill-opacity="0.55"/><rect x="293.10" y="1633.40" width="1.55" height="1.55" fill="#fff" fill-opacity="0.55"/><rect x="293.10" y="1636.50" width="1.55" height="1.55" fill="#fff" fill-opacity="0.55"/><rect x="293.10" y="1639.60" width="1.55" height="1.55" fill="#fff" fill-opacity="0.55"/><rect x="293.10" y="1642.70" width="1.55" height="1.55" fill="#fff" fill-opacity="0.55"/><rect x="294.65" y="1628.75" width="1.55" height="1.55" fill="#fff" fill-opacity="0.4"/><rect x="294.65" y="1631.85" width="1.55" height="1.55" fill="#fff" fill-opacity="0.4"/><rect x="294.65" y="1634.95" width="1.55" height="1.55" fill="#fff" fill-opacity="0.4"/><rect x="294.65" y="1638.05" width="1.55" height="1.55" fill="#fff" fill-opacity="0.4"/><rect x="294.65" y="1641.15" width="1.55" height="1.55" fill="#fff" fill-opacity="0.4"/><rect x="296.20" y="1627.20" width="1.55" height="1.55" fill="#fff" fill-opacity="0.28"/><rect x="296.20" y="1630.30" width="1.55" height="1.55" fill="#fff" fill-opacity="0.28"/><rect x="296.20" y="1633.40" width="1.55" height="1.55" fill="#fff" fill-opacity="0.28"/><rect x="296.20" y="1636.50" width="1.55" height="1.55" fill="#fff" fill-opacity="0.28"/><rect x="296.20" y="1639.60" width="1.55" height="1.55" fill="#fff" fill-opacity="0.28"/><rect x="296.20" y="1642.70" width="1.55" height="1.55" fill="#fff" fill-opacity="0.28"/><rect x="297.75" y="1628.75" width="1.55" height="1.55" fill="#fff" fill-opacity="0.18"/><rect x="297.75" y="1631.85" width="1.55" height="1.55" fill="#fff" fill-opacity="0.18"/><rect x="297.75" y="1634.95" width="1.55" height="1.55" fill="#fff" fill-opacity="0.18"/><rect x="297.75" y="1638.05" width="1.55" height="1.55" fill="#fff" fill-opacity="0.18"/><rect x="297.75" y="1641.15" width="1.55" height="1.55" fill="#fff" fill-opacity="0.18"/><rect x="290.0" y="1627.2" width="9.5" height="18.4" fill="#fff" fill-opacity="0.22"/><polyline points="367.5,1643.2 379.0,1629.2 390.5,1643.2" fill="none" stroke="#fff" stroke-width="4.2" stroke-linecap="round" stroke-linejoin="miter"/><circle cx="443.8" cy="1626.9" r="3.2" fill="#fff"/><circle cx="443.8" cy="1635.9" r="3.2" fill="#fff"/><circle cx="443.8" cy="1644.9" r="3.2" fill="#fff"/></svg>
<div class="a" style="left:248.0px;top:1614px;width:2px;height:45px;background:repeating-linear-gradient(to bottom,#0c0d12 0 2px,transparent 2px 6px);"></div>
<div class="a" style="left:333.8px;top:1614px;width:2px;height:45px;background:repeating-linear-gradient(to bottom,#0c0d12 0 2px,transparent 2px 6px);"></div>
<svg class="a" style="left:496.0px;top:1188.0px;" width="38.0" height="38.0" viewBox="496 1188 38 38"><rect x="499.9" y="1193.7" width="28.4" height="21.8" rx="4.6" fill="none" stroke="#fff" stroke-width="3.8"/><path d="M505.5,1219.2 Q514,1222.6 522.5,1219.2 L522.5,1219 L505.5,1219 Z" fill="#fff"/></svg>
<div class="t " style="left:533.9px;top:1185.7px;height:40px;line-height:40px;font-size:25.5px;color:#fff;letter-spacing:-1.22px;">GB Camera</div>
<svg class="a" style="left:758.0px;top:1188.0px;" width="40.0" height="36.0" viewBox="758 1188 40 36"><path d="M760.6,1206 Q769,1192.2 778.2,1192.2 Q787.4,1192.2 795.8,1206 Q787.4,1219.8 778.2,1219.8 Q769,1219.8 760.6,1206 Z" fill="#fff"/><circle cx="778.1" cy="1206" r="8.9" fill="#27282d"/><circle cx="778.1" cy="1206" r="5" fill="#fff"/></svg>
<svg class="a" style="left:816.0px;top:1184.0px;" width="36.0" height="44.0" viewBox="816 1184 36 44"><rect x="820.2" y="1206.6" width="27.6" height="17.6" rx="2.4" fill="#999a9b"/><path d="M826.4,1200.5 L826.4,1197.6 Q826.4,1190.6 833.6,1190.6 Q840.8,1190.6 840.8,1197.6 L840.8,1207" fill="none" stroke="#999a9b" stroke-width="4.6" stroke-linecap="round"/></svg>
<div class="a" style="left:486.0px;top:1612.0px;width:50.0px;height:50.0px;background:#3b3f4c;border-radius:8px;"></div>
<svg class="a" style="left:480.0px;top:1608.0px;" width="360.0" height="58.0" viewBox="480 1608 360 58"><rect x="496.4" y="1634.0" width="28.4" height="4.4" fill="#fff"/><rect x="508.4" y="1622.0" width="4.4" height="28.4" fill="#fff"/><g transform="translate(577.0,1636.6) scale(1.0)" fill="#8d9099"><path d="M-7,-14.3 Q-7,-16.6 -4.6,-16.6 L4.6,-16.6 Q7,-16.6 7,-14.3 Z"/><rect x="-15" y="-14.6" width="30" height="4.2" rx="1.6"/><path d="M-13,-8.8 L-8.4,-8.8 L-8.4,7.6 Q-8.4,11 -5,11 L5,11 Q8.4,11 8.4,7.6 L8.4,-8.8 L13,-8.8 L13,9.4 Q13,15.8 6.6,15.8 L-6.6,15.8 Q-13,15.8 -13,9.4 Z"/><rect x="-5.6" y="-7.2" width="2" height="14.6"/><rect x="-1" y="-7.2" width="2" height="14.6"/><rect x="3.6" y="-7.2" width="2" height="14.6"/></g><circle cx="661.8" cy="1636.2" r="8.91" fill="none" stroke="#8d9099" stroke-width="5.55"/><rect x="658.59" y="1621.60" width="6.42" height="5.84" rx="1.61" fill="#8d9099" transform="rotate(0.0 661.8 1636.2)"/><rect x="658.59" y="1621.60" width="6.42" height="5.84" rx="1.61" fill="#8d9099" transform="rotate(45.0 661.8 1636.2)"/><rect x="658.59" y="1621.60" width="6.42" height="5.84" rx="1.61" fill="#8d9099" transform="rotate(90.0 661.8 1636.2)"/><rect x="658.59" y="1621.60" width="6.42" height="5.84" rx="1.61" fill="#8d9099" transform="rotate(135.0 661.8 1636.2)"/><rect x="658.59" y="1621.60" width="6.42" height="5.84" rx="1.61" fill="#8d9099" transform="rotate(180.0 661.8 1636.2)"/><rect x="658.59" y="1621.60" width="6.42" height="5.84" rx="1.61" fill="#8d9099" transform="rotate(225.0 661.8 1636.2)"/><rect x="658.59" y="1621.60" width="6.42" height="5.84" rx="1.61" fill="#8d9099" transform="rotate(270.0 661.8 1636.2)"/><rect x="658.59" y="1621.60" width="6.42" height="5.84" rx="1.61" fill="#8d9099" transform="rotate(315.0 661.8 1636.2)"/><polyline points="736.0,1642.7 748.0,1629.7 760.0,1642.7" fill="none" stroke="#8d9099" stroke-width="3.4" stroke-linecap="round" stroke-linejoin="miter"/><polyline points="801.8,1629.7 813.8,1642.7 825.8,1629.7" fill="none" stroke="#8d9099" stroke-width="3.4" stroke-linecap="round" stroke-linejoin="miter"/></svg>
<div class="a" style="left:617.6px;top:1614px;width:2px;height:45px;background:repeating-linear-gradient(to bottom,#0c0d12 0 2px,transparent 2px 6px);"></div>
<div class="a" style="left:704.0px;top:1614px;width:2px;height:45px;background:repeating-linear-gradient(to bottom,#0c0d12 0 2px,transparent 2px 6px);"></div>
<div class="t " style="left:937.1px;top:1169.1px;height:40px;line-height:40px;font-size:25.5px;color:#fff;letter-spacing:-1.17px;">GB Camera</div>
<div class="t " style="left:1506.0px;top:1169.1px;height:40px;line-height:40px;font-size:25.5px;color:#8d9099;letter-spacing:-0.41px;">0.0 dB</div>
<div class="a" style="left:938.0px;top:1210.0px;width:52.0px;height:52.0px;background:#3b3f4c;border-radius:8px;"></div>
<svg class="a" style="left:950.0px;top:1210.0px;" width="28.0" height="52.0" viewBox="950 1210 28 52"><circle cx="964" cy="1222.7" r="4.6" fill="#fff"/><circle cx="964" cy="1236.2" r="4.6" fill="#fff"/><circle cx="964" cy="1249.7" r="4.6" fill="#fff"/></svg>
<div class="a" style="left:994.2px;top:1210.0px;width:393.8px;height:14.2px;background:#1d681f;"></div>
<div class="a" style="left:1388.0px;top:1210.0px;width:104.0px;height:14.2px;background:#7a5d13;"></div>
<div class="a" style="left:1492.0px;top:1210.0px;width:86.4px;height:14.2px;background:#7b1424;"></div>
<div class="a" style="left:994.2px;top:1226.0px;width:393.8px;height:14.4px;background:#1d681f;"></div>
<div class="a" style="left:1388.0px;top:1226.0px;width:104.0px;height:14.4px;background:#7a5d13;"></div>
<div class="a" style="left:1492.0px;top:1226.0px;width:86.4px;height:14.4px;background:#7b1424;"></div>
<div class="a" style="left:994.2px;top:1210.0px;width:6.8px;height:30.4px;background:rgba(0,0,0,0.12);"></div>
<div class="a" style="left:1001.0px;top:1210.0px;width:1.6px;height:30.4px;background:rgba(0,0,0,0.3);"></div>
<div class="a" style="left:1002.7px;top:1240.0px;width:2.4px;height:5.2px;background:#fff;"></div>
<div class="t " style="left:992.8px;top:1235.1px;height:40px;line-height:40px;font-size:16.5px;color:#fff;">-60</div>
<div class="a" style="left:1050.4px;top:1240.0px;width:2.4px;height:5.2px;background:#fff;"></div>
<div class="t " style="left:1040.4px;top:1235.1px;height:40px;line-height:40px;font-size:16.5px;color:#fff;">-55</div>
<div class="a" style="left:1098.0px;top:1240.0px;width:2.4px;height:5.2px;background:#fff;"></div>
<div class="t " style="left:1088.1px;top:1235.1px;height:40px;line-height:40px;font-size:16.5px;color:#fff;">-50</div>
<div class="a" style="left:1145.7px;top:1240.0px;width:2.4px;height:5.2px;background:#fff;"></div>
<div class="t " style="left:1135.8px;top:1235.1px;height:40px;line-height:40px;font-size:16.5px;color:#fff;">-45</div>
<div class="a" style="left:1193.3px;top:1240.0px;width:2.4px;height:5.2px;background:#fff;"></div>
<div class="t " style="left:1183.4px;top:1235.1px;height:40px;line-height:40px;font-size:16.5px;color:#fff;">-40</div>
<div class="a" style="left:1241.0px;top:1240.0px;width:2.4px;height:5.2px;background:#fff;"></div>
<div class="t " style="left:1231.1px;top:1235.1px;height:40px;line-height:40px;font-size:16.5px;color:#fff;">-35</div>
<div class="a" style="left:1288.7px;top:1240.0px;width:2.4px;height:5.2px;background:#fff;"></div>
<div class="t " style="left:1278.7px;top:1235.1px;height:40px;line-height:40px;font-size:16.5px;color:#fff;">-30</div>
<div class="a" style="left:1336.3px;top:1240.0px;width:2.4px;height:5.2px;background:#fff;"></div>
<div class="t " style="left:1326.4px;top:1235.1px;height:40px;line-height:40px;font-size:16.5px;color:#fff;">-25</div>
<div class="a" style="left:1384.0px;top:1240.0px;width:2.4px;height:5.2px;background:#fff;"></div>
<div class="t " style="left:1374.1px;top:1235.1px;height:40px;line-height:40px;font-size:16.5px;color:#fff;">-20</div>
<div class="a" style="left:1431.6px;top:1240.0px;width:2.4px;height:5.2px;background:#fff;"></div>
<div class="t " style="left:1421.7px;top:1235.1px;height:40px;line-height:40px;font-size:16.5px;color:#fff;">-15</div>
<div class="a" style="left:1479.3px;top:1240.0px;width:2.4px;height:5.2px;background:#fff;"></div>
<div class="t " style="left:1469.4px;top:1235.1px;height:40px;line-height:40px;font-size:16.5px;color:#fff;">-10</div>
<div class="a" style="left:1527.0px;top:1240.0px;width:2.4px;height:5.2px;background:#fff;"></div>
<div class="t " style="left:1520.3px;top:1235.1px;height:40px;line-height:40px;font-size:16.5px;color:#fff;">-5</div>
<div class="a" style="left:1574.6px;top:1240.0px;width:2.4px;height:5.2px;background:#fff;"></div>
<div class="t " style="left:1567.2px;top:1235.1px;height:40px;line-height:40px;font-size:16.5px;color:#fff;">0</div>
<div class="a" style="left:938.0px;top:1266.3px;width:52.0px;height:52.0px;background:#3b3f4c;border-radius:8px;"></div>
<svg class="a" style="left:944.0px;top:1275.3px;" width="42.0" height="34.0" viewBox="944 1275.3 42 34"><g transform="translate(945.8,1276.3)"><path d="M0.2,12.2 Q0.2,9 3.2,9 L7,9 L16.2,0.2 L16.2,31.8 L7,23 L3.2,23 Q0.2,23 0.2,19.8 Z" fill="#fff"/><path d="M21.2,8.6 Q27.4,16 21.2,23.4" fill="none" stroke="#fff" stroke-width="4.4" stroke-linecap="round"/><path d="M29.4,3.6 Q38.4,16 29.4,28.4" fill="none" stroke="#fff" stroke-width="4.6" stroke-linecap="round"/></g></svg>
<div class="a" style="left:1023.8px;top:1290.3px;width:2.0px;height:23.6px;background:#4b4e59;"></div>
<div class="a" style="left:1046.0px;top:1290.3px;width:2.0px;height:23.6px;background:#4b4e59;"></div>
<div class="a" style="left:1070.3px;top:1290.3px;width:2.0px;height:23.6px;background:#4b4e59;"></div>
<div class="a" style="left:1095.7px;top:1290.3px;width:2.0px;height:23.6px;background:#4b4e59;"></div>
<div class="a" style="left:1127.7px;top:1290.3px;width:2.0px;height:23.6px;background:#4b4e59;"></div>
<div class="a" style="left:1166.4px;top:1290.3px;width:2.0px;height:23.6px;background:#4b4e59;"></div>
<div class="a" style="left:1211.9px;top:1290.3px;width:2.0px;height:23.6px;background:#4b4e59;"></div>
<div class="a" style="left:1275.9px;top:1290.3px;width:2.0px;height:23.6px;background:#4b4e59;"></div>
<div class="a" style="left:1367.8px;top:1290.3px;width:2.0px;height:23.6px;background:#4b4e59;"></div>
<div class="a" style="left:994.2px;top:1298.1px;width:565.8px;height:8.0px;background:#4769db;border-radius:4px;"></div>
<div class="a" style="left:1537.8px;top:1291.9px;width:40.4px;height:20.4px;background:#fff;border-radius:10.2px;"></div>
<div class="a" style="left:924.0px;top:1325.0px;width:668.0px;height:2.0px;background:#323541;"></div>
<div class="t " style="left:936.4px;top:1329.3px;height:40px;line-height:40px;font-size:25.5px;color:#fff;letter-spacing:0.12px;">Mic/Aux</div>
<div class="t " style="left:1506.0px;top:1329.3px;height:40px;line-height:40px;font-size:25.5px;color:#8d9099;letter-spacing:-0.41px;">0.0 dB</div>
<div class="a" style="left:938.0px;top:1370.0px;width:52.0px;height:52.0px;background:#3b3f4c;border-radius:8px;"></div>
<svg class="a" style="left:950.0px;top:1370.0px;" width="28.0" height="52.0" viewBox="950 1370 28 52"><circle cx="964" cy="1382.7" r="4.6" fill="#fff"/><circle cx="964" cy="1396.2" r="4.6" fill="#fff"/><circle cx="964" cy="1409.7" r="4.6" fill="#fff"/></svg>
<div class="a" style="left:994.2px;top:1370.0px;width:393.8px;height:14.4px;background:#1d681f;"></div>
<div class="a" style="left:1388.0px;top:1370.0px;width:104.0px;height:14.4px;background:#7a5d13;"></div>
<div class="a" style="left:1492.0px;top:1370.0px;width:86.4px;height:14.4px;background:#7b1424;"></div>
<div class="a" style="left:994.2px;top:1370.0px;width:167.8px;height:14.4px;background:#37d244;"></div>
<div class="a" style="left:994.2px;top:1370.0px;width:6.4px;height:14.4px;background:#4fc04f;"></div>
<div class="a" style="left:1001.2px;top:1370.0px;width:1.4px;height:14.4px;background:#1c5a1e;"></div>
<div class="a" style="left:1034.0px;top:1370.0px;width:6.2px;height:14.4px;background:#050505;"></div>
<div class="a" style="left:1294.0px;top:1370.0px;width:6.2px;height:14.4px;background:#39d646;"></div>
<div class="a" style="left:1002.7px;top:1384.0px;width:2.4px;height:5.2px;background:#fff;"></div>
<div class="t " style="left:992.8px;top:1379.1px;height:40px;line-height:40px;font-size:16.5px;color:#fff;">-60</div>
<div class="a" style="left:1050.4px;top:1384.0px;width:2.4px;height:5.2px;background:#fff;"></div>
<div class="t " style="left:1040.4px;top:1379.1px;height:40px;line-height:40px;font-size:16.5px;color:#fff;">-55</div>
<div class="a" style="left:1098.0px;top:1384.0px;width:2.4px;height:5.2px;background:#fff;"></div>
<div class="t " style="left:1088.1px;top:1379.1px;height:40px;line-height:40px;font-size:16.5px;color:#fff;">-50</div>
<div class="a" style="left:1145.7px;top:1384.0px;width:2.4px;height:5.2px;background:#fff;"></div>
<div class="t " style="left:1135.8px;top:1379.1px;height:40px;line-height:40px;font-size:16.5px;color:#fff;">-45</div>
<div class="a" style="left:1193.3px;top:1384.0px;width:2.4px;height:5.2px;background:#fff;"></div>
<div class="t " style="left:1183.4px;top:1379.1px;height:40px;line-height:40px;font-size:16.5px;color:#fff;">-40</div>
<div class="a" style="left:1241.0px;top:1384.0px;width:2.4px;height:5.2px;background:#fff;"></div>
<div class="t " style="left:1231.1px;top:1379.1px;height:40px;line-height:40px;font-size:16.5px;color:#fff;">-35</div>
<div class="a" style="left:1288.7px;top:1384.0px;width:2.4px;height:5.2px;background:#fff;"></div>
<div class="t " style="left:1278.7px;top:1379.1px;height:40px;line-height:40px;font-size:16.5px;color:#fff;">-30</div>
<div class="a" style="left:1336.3px;top:1384.0px;width:2.4px;height:5.2px;background:#fff;"></div>
<div class="t " style="left:1326.4px;top:1379.1px;height:40px;line-height:40px;font-size:16.5px;color:#fff;">-25</div>
<div class="a" style="left:1384.0px;top:1384.0px;width:2.4px;height:5.2px;background:#fff;"></div>
<div class="t " style="left:1374.1px;top:1379.1px;height:40px;line-height:40px;font-size:16.5px;color:#fff;">-20</div>
<div class="a" style="left:1431.6px;top:1384.0px;width:2.4px;height:5.2px;background:#fff;"></div>
<div class="t " style="left:1421.7px;top:1379.1px;height:40px;line-height:40px;font-size:16.5px;color:#fff;">-15</div>
<div class="a" style="left:1479.3px;top:1384.0px;width:2.4px;height:5.2px;background:#fff;"></div>
<div class="t " style="left:1469.4px;top:1379.1px;height:40px;line-height:40px;font-size:16.5px;color:#fff;">-10</div>
<div class="a" style="left:1527.0px;top:1384.0px;width:2.4px;height:5.2px;background:#fff;"></div>
<div class="t " style="left:1520.3px;top:1379.1px;height:40px;line-height:40px;font-size:16.5px;color:#fff;">-5</div>
<div class="a" style="left:1574.6px;top:1384.0px;width:2.4px;height:5.2px;background:#fff;"></div>
<div class="t " style="left:1567.2px;top:1379.1px;height:40px;line-height:40px;font-size:16.5px;color:#fff;">0</div>
<div class="a" style="left:938.0px;top:1426.3px;width:52.0px;height:52.0px;background:#3b3f4c;border-radius:8px;"></div>
<svg class="a" style="left:944.0px;top:1435.3px;" width="42.0" height="34.0" viewBox="944 1435.3 42 34"><g transform="translate(945.8,1436.3)"><path d="M0.2,12.2 Q0.2,9 3.2,9 L7,9 L16.2,0.2 L16.2,31.8 L7,23 L3.2,23 Q0.2,23 0.2,19.8 Z" fill="#fff"/><path d="M21.2,8.6 Q27.4,16 21.2,23.4" fill="none" stroke="#fff" stroke-width="4.4" stroke-linecap="round"/><path d="M29.4,3.6 Q38.4,16 29.4,28.4" fill="none" stroke="#fff" stroke-width="4.6" stroke-linecap="round"/></g></svg>
<div class="a" style="left:1023.8px;top:1450.3px;width:2.0px;height:23.6px;background:#4b4e59;"></div>
<div class="a" style="left:1046.0px;top:1450.3px;width:2.0px;height:23.6px;background:#4b4e59;"></div>
<div class="a" style="left:1070.3px;top:1450.3px;width:2.0px;height:23.6px;background:#4b4e59;"></div>
<div class="a" style="left:1095.7px;top:1450.3px;width:2.0px;height:23.6px;background:#4b4e59;"></div>
<div class="a" style="left:1127.7px;top:1450.3px;width:2.0px;height:23.6px;background:#4b4e59;"></div>
<div class="a" style="left:1166.4px;top:1450.3px;width:2.0px;height:23.6px;background:#4b4e59;"></div>
<div class="a" style="left:1211.9px;top:1450.3px;width:2.0px;height:23.6px;background:#4b4e59;"></div>
<div class="a" style="left:1275.9px;top:1450.3px;width:2.0px;height:23.6px;background:#4b4e59;"></div>
<div class="a" style="left:1367.8px;top:1450.3px;width:2.0px;height:23.6px;background:#4b4e59;"></div>
<div class="a" style="left:994.2px;top:1458.1px;width:565.8px;height:8.0px;background:#4769db;border-radius:4px;"></div>
<div class="a" style="left:1537.8px;top:1451.9px;width:40.4px;height:20.4px;background:#fff;border-radius:10.2px;"></div>
<div class="a" style="left:924.0px;top:1486.0px;width:668.0px;height:2.0px;background:#323541;"></div>
<div class="a" style="left:924.0px;top:1488.0px;width:668.0px;height:118.0px;background:#1c1d27;"></div>
<div class="a" style="left:924.0px;top:1606.0px;width:668.0px;height:2.0px;background:#323541;"></div>
<div class="a" style="left:932.0px;top:1612.0px;width:50.0px;height:50.0px;background:#3b3f4c;border-radius:8px;"></div>
<div class="a" style="left:1018.0px;top:1612.0px;width:50.0px;height:50.0px;background:#3b3f4c;border-radius:8px;"></div>
<div class="a" style="left:997.8px;top:1614px;width:2px;height:45px;background:repeating-linear-gradient(to bottom,#0c0d12 0 2px,transparent 2px 6px);"></div>
<svg class="a" style="left:932.0px;top:1612.0px;" width="140.0" height="50.0" viewBox="932 1612 140 50"><circle cx="950.7" cy="1639" r="6.21" fill="none" stroke="#fff" stroke-width="4.14"/><rect x="948.30" y="1628.10" width="4.80" height="4.36" rx="1.20" fill="#fff" transform="rotate(0.0 950.7 1639)"/><rect x="948.30" y="1628.10" width="4.80" height="4.36" rx="1.20" fill="#fff" transform="rotate(45.0 950.7 1639)"/><rect x="948.30" y="1628.10" width="4.80" height="4.36" rx="1.20" fill="#fff" transform="rotate(90.0 950.7 1639)"/><rect x="948.30" y="1628.10" width="4.80" height="4.36" rx="1.20" fill="#fff" transform="rotate(135.0 950.7 1639)"/><rect x="948.30" y="1628.10" width="4.80" height="4.36" rx="1.20" fill="#fff" transform="rotate(180.0 950.7 1639)"/><rect x="948.30" y="1628.10" width="4.80" height="4.36" rx="1.20" fill="#fff" transform="rotate(225.0 950.7 1639)"/><rect x="948.30" y="1628.10" width="4.80" height="4.36" rx="1.20" fill="#fff" transform="rotate(270.0 950.7 1639)"/><rect x="948.30" y="1628.10" width="4.80" height="4.36" rx="1.20" fill="#fff" transform="rotate(315.0 950.7 1639)"/><circle cx="965.1" cy="1628.8" r="3.57" fill="none" stroke="#fff" stroke-width="2.94"/><rect x="963.56" y="1621.80" width="3.08" height="2.80" rx="0.77" fill="#fff" transform="rotate(0.0 965.1 1628.8)"/><rect x="963.56" y="1621.80" width="3.08" height="2.80" rx="0.77" fill="#fff" transform="rotate(45.0 965.1 1628.8)"/><rect x="963.56" y="1621.80" width="3.08" height="2.80" rx="0.77" fill="#fff" transform="rotate(90.0 965.1 1628.8)"/><rect x="963.56" y="1621.80" width="3.08" height="2.80" rx="0.77" fill="#fff" transform="rotate(135.0 965.1 1628.8)"/><rect x="963.56" y="1621.80" width="3.08" height="2.80" rx="0.77" fill="#fff" transform="rotate(180.0 965.1 1628.8)"/><rect x="963.56" y="1621.80" width="3.08" height="2.80" rx="0.77" fill="#fff" transform="rotate(225.0 965.1 1628.8)"/><rect x="963.56" y="1621.80" width="3.08" height="2.80" rx="0.77" fill="#fff" transform="rotate(270.0 965.1 1628.8)"/><rect x="963.56" y="1621.80" width="3.08" height="2.80" rx="0.77" fill="#fff" transform="rotate(315.0 965.1 1628.8)"/><circle cx="1042" cy="1624.0" r="4.1" fill="#fff"/><circle cx="1042" cy="1636.0" r="4.1" fill="#fff"/><circle cx="1042" cy="1648.0" r="4.1" fill="#fff"/></svg>
<div class="a" style="left:1612.0px;top:1180.4px;width:342.0px;height:57.6px;background:#3b3f4c;border-radius:8px;"></div>
<div class="a" style="left:1898.0px;top:1182.0px;width:1.6px;height:54.5px;background:#2a2d37;"></div>
<div class="t " style="left:1633.0px;top:1189.3px;height:40px;line-height:40px;font-size:25.5px;color:#fff;letter-spacing:-1.12px;">Fade</div>
<svg class="a" style="left:1916.0px;top:1202.0px;" width="22.0" height="12.0" viewBox="0 0 22 12"><path d="M1.6,1.5 L20.4,1.5 L11,10.8 Z" fill="#fff"/></svg>
<div class="t " style="left:1611.2px;top:1255.1px;height:40px;line-height:40px;font-size:25.5px;color:#fff;letter-spacing:0.49px;">Duration</div>
<div class="a" style="left:1720.0px;top:1246.4px;width:234.0px;height:57.6px;background:#3b3f4c;border-radius:8px;"></div>
<div class="a" style="left:1898.0px;top:1248.0px;width:1.6px;height:54.5px;background:#2a2d37;"></div>
<div class="a" style="left:1899.6px;top:1269.0px;width:52.4px;height:1.4px;background:#2e313c;"></div>
<div class="t " style="left:1741.4px;top:1255.1px;height:40px;line-height:40px;font-size:25.5px;color:#fff;letter-spacing:-0.44px;">300 ms</div>
<svg class="a" style="left:1910.0px;top:1250.0px;" width="34.0" height="50.0" viewBox="1910 1250 34 50"><polyline points="1917.2,1267.7 1926.2,1258.7 1935.2,1267.7" fill="none" stroke="#fff" stroke-width="2.8" stroke-linecap="round" stroke-linejoin="miter"/><polyline points="1917.2,1281.9 1926.2,1290.9 1935.2,1281.9" fill="none" stroke="#fff" stroke-width="2.8" stroke-linecap="round" stroke-linejoin="miter"/></svg>
<div class="a" style="left:1750.0px;top:1308.4px;width:56.0px;height:63.6px;background:#3b3f4c;border-radius:8px;"></div>
<svg class="a" style="left:1750.0px;top:1308.0px;" width="200.0" height="64.0" viewBox="1750 1308 200 64"><rect x="1762.0" y="1337.6" width="32" height="5" fill="#fff"/><rect x="1775.5" y="1324.1" width="5" height="32" fill="#fff"/><g transform="translate(1851.0,1340.6) scale(1.14)" fill="#8d9099"><path d="M-7,-14.3 Q-7,-16.6 -4.6,-16.6 L4.6,-16.6 Q7,-16.6 7,-14.3 Z"/><rect x="-15" y="-14.6" width="30" height="4.2" rx="1.6"/><path d="M-13,-8.8 L-8.4,-8.8 L-8.4,7.6 Q-8.4,11 -5,11 L5,11 Q8.4,11 8.4,7.6 L8.4,-8.8 L13,-8.8 L13,9.4 Q13,15.8 6.6,15.8 L-6.6,15.8 Q-13,15.8 -13,9.4 Z"/><rect x="-5.6" y="-7.2" width="2" height="14.6"/><rect x="-1" y="-7.2" width="2" height="14.6"/><rect x="3.6" y="-7.2" width="2" height="14.6"/></g><circle cx="1921.9" cy="1326.4" r="4.8" fill="#8d9099"/><circle cx="1921.9" cy="1340.0" r="4.8" fill="#8d9099"/><circle cx="1921.9" cy="1353.6" r="4.8" fill="#8d9099"/></svg>
<div class="a" style="left:1986.0px;top:1180.0px;width:404.0px;height:72.0px;background:#3b3f4c;border-radius:8px;"></div>
<div class="t " style="left:2099.9px;top:1195.9px;height:40px;line-height:40px;font-size:25.5px;color:#fff;letter-spacing:-0.09px;">Start Streaming</div>
<div class="a" style="left:1986.0px;top:1260.0px;width:404.0px;height:72.0px;background:#3b3f4c;border-radius:8px;"></div>
<div class="t " style="left:2101.1px;top:1275.9px;height:40px;line-height:40px;font-size:25.5px;color:#fff;letter-spacing:-0.24px;">Start Recording</div>
<div class="a" style="left:1986.0px;top:1420.0px;width:404.0px;height:72.0px;background:#3b3f4c;border-radius:8px;"></div>
<div class="t " style="left:2115.5px;top:1435.9px;height:40px;line-height:40px;font-size:25.5px;color:#fff;letter-spacing:0.10px;">Studio Mode</div>
<div class="a" style="left:1986.0px;top:1500.0px;width:404.0px;height:72.0px;background:#3b3f4c;border-radius:8px;"></div>
<div class="t " style="left:2142.5px;top:1515.9px;height:40px;line-height:40px;font-size:25.5px;color:#fff;letter-spacing:-0.24px;">Settings</div>
<div class="a" style="left:1986.0px;top:1580.0px;width:404.0px;height:72.0px;background:#3b3f4c;border-radius:8px;"></div>
<div class="t " style="left:2166.2px;top:1595.9px;height:40px;line-height:40px;font-size:25.5px;color:#fff;letter-spacing:-0.32px;">Exit</div>
<div class="a" style="left:1986.0px;top:1340.0px;width:324.0px;height:72.0px;background:#454a58;border-radius:8px;border:2px solid #525766;"></div>
<div class="t " style="left:2034.3px;top:1355.9px;height:40px;line-height:40px;font-size:25.5px;color:#fff;letter-spacing:-0.28px;">Start Virtual Camera</div>
<div class="a" style="left:2318.0px;top:1340.0px;width:72.0px;height:72.0px;background:#3b3f4c;border-radius:8px;"></div>
<svg class="a" style="left:2336.0px;top:1358.0px;" width="36.0" height="36.0" viewBox="0 0 36 36"><circle cx="18" cy="18.2" r="9.52" fill="none" stroke="#fff" stroke-width="5.93"/><rect x="14.57" y="2.60" width="6.86" height="6.24" rx="1.72" fill="#fff" transform="rotate(0.0 18 18.2)"/><rect x="14.57" y="2.60" width="6.86" height="6.24" rx="1.72" fill="#fff" transform="rotate(45.0 18 18.2)"/><rect x="14.57" y="2.60" width="6.86" height="6.24" rx="1.72" fill="#fff" transform="rotate(90.0 18 18.2)"/><rect x="14.57" y="2.60" width="6.86" height="6.24" rx="1.72" fill="#fff" transform="rotate(135.0 18 18.2)"/><rect x="14.57" y="2.60" width="6.86" height="6.24" rx="1.72" fill="#fff" transform="rotate(180.0 18 18.2)"/><rect x="14.57" y="2.60" width="6.86" height="6.24" rx="1.72" fill="#fff" transform="rotate(225.0 18 18.2)"/><rect x="14.57" y="2.60" width="6.86" height="6.24" rx="1.72" fill="#fff" transform="rotate(270.0 18 18.2)"/><rect x="14.57" y="2.60" width="6.86" height="6.24" rx="1.72" fill="#fff" transform="rotate(315.0 18 18.2)"/></svg>
<div class="a" style="left:112.0px;top:1675.5px;width:2292.0px;height:52.5px;background:#252a33;border-top:2px solid #363a46;"></div>
<div class="a" style="left:1568.5px;top:1677.0px;width:1.6px;height:50.0px;background:#353945;"></div>
<div class="a" style="left:1633.8px;top:1677.0px;width:1.6px;height:50.0px;background:#353945;"></div>
<div class="a" style="left:1816.8px;top:1677.0px;width:1.6px;height:50.0px;background:#353945;"></div>
<div class="a" style="left:1998.0px;top:1677.0px;width:1.6px;height:50.0px;background:#353945;"></div>
<div class="a" style="left:2145.8px;top:1677.0px;width:1.6px;height:50.0px;background:#353945;"></div>
<div class="t " style="left:2015.3px;top:1687.0px;height:40px;line-height:40px;font-size:25.5px;color:#fff;letter-spacing:-1.47px;">CPU: 1.2%</div>
<div class="t " style="left:2163.4px;top:1687.0px;height:40px;line-height:40px;font-size:25.5px;color:#fff;letter-spacing:-0.90px;">30.00 / 30.00 FPS</div>
<div class="t " style="left:1704.2px;top:1687.0px;height:40px;line-height:40px;font-size:25.5px;color:#8d9099;letter-spacing:-0.62px;">00:00:00</div>
<div class="t " style="left:1886.0px;top:1687.0px;height:40px;line-height:40px;font-size:25.5px;color:#8d9099;letter-spacing:-0.62px;">00:00:00</div>
<svg class="a" style="left:1584.0px;top:1688.0px;" width="36.0" height="34.0" viewBox="1584 1688 36 34"><rect x="1586.0" y="1712.1" width="5.4" height="7.5" rx="1.6" fill="#4d525f"/><rect x="1594.1" y="1705.6" width="5.4" height="14" rx="1.6" fill="#4d525f"/><rect x="1602.2" y="1698.6" width="5.4" height="21" rx="1.6" fill="#4d525f"/><rect x="1610.3" y="1691.6" width="5.4" height="28" rx="1.6" fill="#4d525f"/></svg>
<svg class="a" style="left:1648.0px;top:1686.0px;" width="40.0" height="40.0" viewBox="1648 1686 40 40"><circle cx="1667.9" cy="1705.8" r="5.2" fill="#858993"/><path d="M1662.4,1699.6 A8.4,8.4 0 0 0 1662.4,1712 M1673.4,1699.6 A8.4,8.4 0 0 1 1673.4,1712" fill="none" stroke="#666a76" stroke-width="2.4" stroke-linecap="round"/><path d="M1658.6,1695.4 A14,14 0 0 0 1658.6,1716.2 M1677.2,1695.4 A14,14 0 0 1 1677.2,1716.2" fill="none" stroke="#474b58" stroke-width="2.4" stroke-linecap="round"/></svg>
<div class="a" style="left:1835.6px;top:1691.6px;width:28.4px;height:28.4px;border-radius:50%;background:#535864;"></div>
</div></div>
<div id="edge"></div>
<svg class="a" style="left:2146px;top:1376px;" width="34" height="42" viewBox="0 0 34 42"><path d="M4.6,5.4 L4.6,31.6 L10.8,25.8 L15.4,36.4 L20.2,34.2 L15.6,24 L24.2,24 Z" fill="#000" stroke="#fff" stroke-width="2.4" stroke-linejoin="round"/></svg>
</body></html>
